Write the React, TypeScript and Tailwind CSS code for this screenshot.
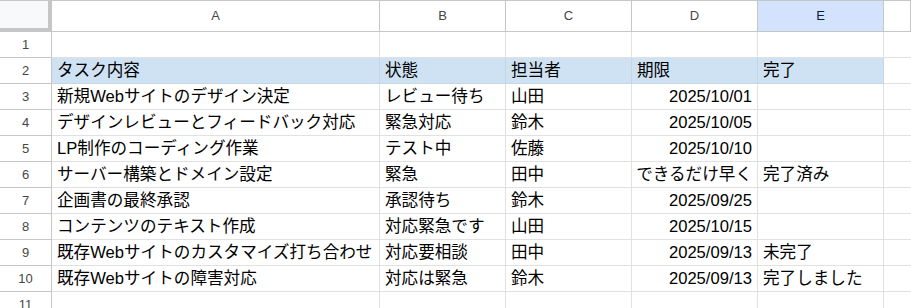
const columns = ["A", "B", "C", "D", "E", ""];

type Row = [string, string, string, string, string];

const rows: Row[] = [
  ["", "", "", "", ""],
  ["タスク内容", "状態", "担当者", "期限", "完了"],
  ["新規Webサイトのデザイン決定", "レビュー待ち", "山田", "2025/10/01", ""],
  ["デザインレビューとフィードバック対応", "緊急対応", "鈴木", "2025/10/05", ""],
  ["LP制作のコーディング作業", "テスト中", "佐藤", "2025/10/10", ""],
  ["サーバー構築とドメイン設定", "緊急", "田中", "できるだけ早く", "完了済み"],
  ["企画書の最終承認", "承認待ち", "鈴木", "2025/09/25", ""],
  ["コンテンツのテキスト作成", "対応緊急です", "山田", "2025/10/15", ""],
  ["既存Webサイトのカスタマイズ打ち合わせ", "対応要相談", "田中", "2025/09/13", "未完了"],
  ["既存Webサイトの障害対応", "対応は緊急", "鈴木", "2025/09/13", "完了しました"],
  ["", "", "", "", ""],
];

const font = {
  fontFamily: '"Liberation Sans", "Noto Sans CJK JP", Arial, sans-serif',
};

export default function App() {
  return (
    <div className="w-[911px] h-[308px] overflow-hidden bg-white" style={font}>
      <div className="grid grid-cols-[52px_328px_126px_126px_126px_126px_1fr] border-t border-[#c4c7c5]">
        {/* header row */}
        <div className="h-[31px] bg-[#f8f9fa] border-r-4 border-b-4 border-[#c4c7c5]" />
        {columns.map((c, i) => (
          <div
            key={i}
            className={`h-[31px] flex items-center justify-center border-r border-b border-[#c4c7c5] text-[13px] ${
              c === "E" ? "bg-[#d3e3fd] text-[#041e49]" : "bg-white text-[#444746]"
            }`}
          >
            {c}
          </div>
        ))}

        {rows.map((row, r) => (
          <RowCells key={r} index={r + 1} row={row} />
        ))}
      </div>
    </div>
  );
}

function RowCells({ index, row }: { index: number; row: Row }) {
  const isHead = index === 2;
  return (
    <>
      <div className="h-[26px] flex items-center justify-center border-r border-b border-[#c4c7c5] text-[13px] text-[#444746] pt-[1px]">
        {index}
      </div>
      {row.map((cell, i) => (
        <div
          key={i}
          className={`h-[26px] flex items-center px-[5px] pt-[1px] border-r border-b whitespace-nowrap overflow-visible text-[16.6px] text-black ${
            isHead ? "bg-[#cfe2f3] border-[#c8d6e3]" : "bg-white border-[#e1e1e1]"
          } ${i === 3 && !isHead ? "justify-end pr-[5px]" : ""}`}
        >
          {cell}
        </div>
      ))}
      <div className="h-[26px] border-b border-[#e1e1e1]" />
    </>
  );
}
